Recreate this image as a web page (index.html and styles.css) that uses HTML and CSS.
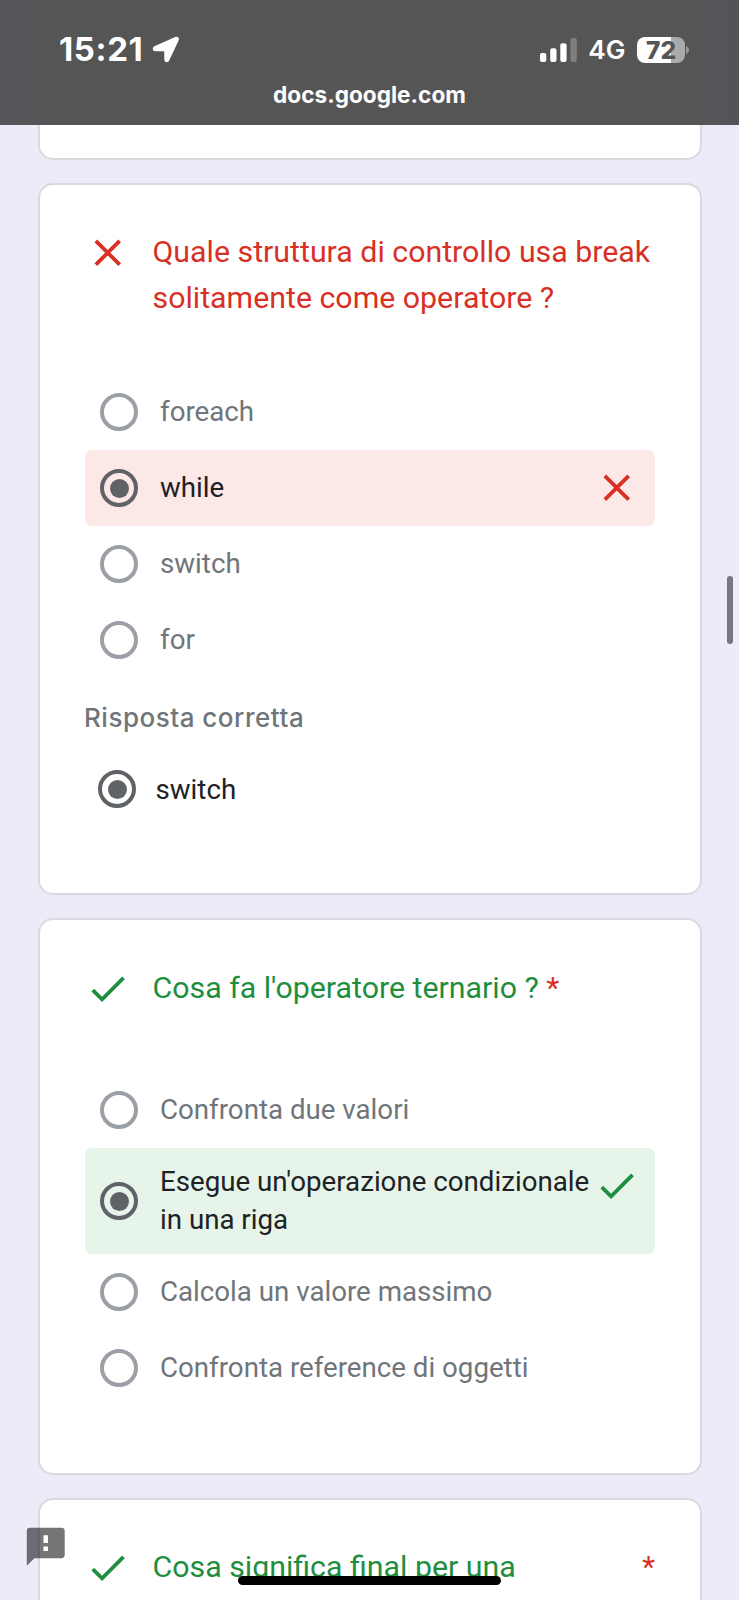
FILE: index.html
```html
<!DOCTYPE html>
<html lang="it">
<head>
<meta charset="utf-8">
<title>docs.google.com</title>
<link rel="stylesheet" href="styles.css">
</head>
<body>
<svg class="defs" aria-hidden="true">
  <symbol id="cross" viewBox="0 0 24 24"><path d="M19 6.41L17.59 5 12 10.59 6.41 5 5 6.41 10.59 12 5 17.59 6.41 19 12 13.41 17.59 19 19 17.59 13.41 12z"/></symbol>
  <symbol id="check" viewBox="0 0 24 24"><path d="M9 16.2L4.8 12l-1.4 1.4L9 19 21 7l-1.4-1.4L9 16.2z"/></symbol>
</svg>
<div class="screen">
  <header class="status">
    <div class="status-row">
      <div class="clock">
        <span class="time">15:21</span>
        <svg class="location" viewBox="0 0 28 28"><path d="M23.2 1.1 2.4 10.3C-.2 11.6.4 15.200 3.400 15.300H11.300Q12.300 15.300 12.300 16.300V23.600C12.400 26.700 15.900 27.200 17.200 24.600L26.600 4.400C27.700 1.900 25.600.100 23.200 1.100Z"/></svg>
      </div>
      <div class="indicators">
        <svg class="signal" viewBox="0 0 37 24"><rect x="0" y="15" width="6.300" height="9" rx="2"/><rect x="10.200" y="10.300" width="6.300" height="13.700" rx="2"/><rect x="20.300" y="5.300" width="6.300" height="18.700" rx="2"/><rect class="dim" x="30.500" y="0" width="6.300" height="24" rx="2"/></svg>
        <span class="network">4G</span>
        <div class="battery"><span class="level">72</span><svg class="cap" viewBox="0 0 3 8"><path d="M0 0C4 1.500 4 6.500 0 8Z"/></svg></div>
      </div>
    </div>
    <div class="url">docs.google.com</div>
  </header>
  <main class="form">
    <section class="card card-prev"></section>

    <section class="card card-wrong">
      <div class="question wrong">
        <svg class="mark"><use href="#cross"/></svg>
        <h2 class="title">Quale struttura di controllo usa break solitamente come operatore ?</h2>
      </div>
      <div class="options">
        <div class="option"><span class="radio"></span><span class="label">foreach</span></div>
        <div class="option chosen bad"><span class="radio"></span><span class="label">while</span><svg class="mark"><use href="#cross"/></svg></div>
        <div class="option"><span class="radio"></span><span class="label">switch</span></div>
        <div class="option"><span class="radio"></span><span class="label">for</span></div>
      </div>
      <div class="correct-heading">Risposta corretta</div>
      <div class="option chosen correct"><span class="radio"></span><span class="label">switch</span></div>
    </section>

    <section class="card card-right">
      <div class="question right">
        <svg class="mark"><use href="#check"/></svg>
        <h2 class="title">Cosa fa l'operatore ternario ? <span class="required">*</span></h2>
      </div>
      <div class="options">
        <div class="option"><span class="radio"></span><span class="label">Confronta due valori</span></div>
        <div class="option chosen good"><span class="radio"></span><span class="label">Esegue un'operazione condizionale<br>in una riga</span><svg class="mark"><use href="#check"/></svg></div>
        <div class="option"><span class="radio"></span><span class="label">Calcola un valore massimo</span></div>
        <div class="option"><span class="radio"></span><span class="label">Confronta reference di oggetti</span></div>
      </div>
    </section>

    <section class="card card-next">
      <div class="question right">
        <svg class="mark"><use href="#check"/></svg>
        <h2 class="title">Cosa significa final per una</h2>
        <span class="required aside">*</span>
      </div>
    </section>
  </main>
  <div class="scrollbar"></div>
  <svg class="feedback" viewBox="0 0 24 24"><path d="M20.500 2H3.500C2.700 2 2 2.700 2 3.500V22l4-4h14.500c.8 0 1.500-.7 1.500-1.500v-13C22 2.700 21.300 2 20.500 2zM13.200 14.300h-2.400v-2.400h2.400v2.400zM13.200 10h-2.400V5.900h2.400V10z"/></svg>
  <div class="home-indicator"></div>
</div>
</body>
</html>
```
FILE: styles.css
```css
* { box-sizing: border-box; }
body { margin: 0; background: #eeeaf8; font-family: Roboto, "Liberation Sans", sans-serif; }
.defs { position: absolute; width: 0; height: 0; }
.screen { position: relative; width: 739px; height: 1600px; overflow: hidden; background: #eeeaf8; }

.status {
  height: 125px;
  padding-top: 30px;
  background: linear-gradient(90deg, #55545a 0, #555 60px, #555 679px, #55535a 739px);
  color: #fff;
  font-family: Inter, "Liberation Sans", sans-serif;
}
.status-row { display: flex; justify-content: space-between; height: 39px; padding: 0 50px 0 59px; }
.clock, .indicators { display: flex; align-items: center; }
.time { font-size: 33px; font-weight: 700; line-height: 39px; letter-spacing: .6px; }
.location { width: 28px; height: 28px; margin-left: 9px; fill: #fff; }
.signal { width: 37px; height: 24px; fill: #fff; }
.signal .dim { opacity: .25; }
.network { margin-left: 11px; font-size: 26.300px; font-weight: 600; line-height: 39px; }
.battery { display: flex; align-items: center; margin-left: 11.500px; }
.level {
  width: 48px; height: 26px; border-radius: 8px;
  background: linear-gradient(90deg, #fff 34px, #aaa 34px);
  color: #555; font-size: 24.500px; font-weight: 800; line-height: 26px; text-align: center;
}
.cap { width: 3px; height: 8px; margin-left: 1px; fill: #999; }
.url { margin-top: 12px; font-size: 22.600px; font-weight: 700; line-height: 28px; text-align: center; }

.card { width: 664px; margin: 0 0 23px 38px; padding: 44px 45px 0; border: 2px solid #dbd8e0; border-radius: 15px; background: #fff; }
.card-prev { height: 35px; border-top: 0; border-radius: 0 0 15px 15px; padding: 0; }
.card-wrong { height: 712px; }
.card-right { height: 557px; }
.card-next { height: 200px; }

.question { display: flex; align-items: flex-start; }
.mark { flex: none; width: 45.500px; height: 45.500px; fill: currentColor; }
.question .mark { margin: 1px 0 0 -.5px; }
.title { margin: 0 0 0 22.500px; font-size: 30.320px; font-weight: 400; line-height: 45.500px; }
.wrong .title { width: 510px; margin-right: -10px; }
.wrong { color: #d93025; }
.right { color: #1e8e3e; }
.required { color: #d93025; }
.aside { margin-left: auto; font-size: 30.320px; line-height: 45.500px; }

.card-wrong .options { margin-top: 54.400px; }
.card-right { padding-top: 44.500px; }
.card-right .options { margin-top: 61.400px; }
.option { display: flex; align-items: center; min-height: 75.800px; padding: 15px; border-radius: 7px; color: #70757a; }
.label { flex: none; margin-left: 22px; font-size: 27.700px; line-height: 37.900px; }
.radio { display: grid; place-items: center; flex: none; width: 38px; height: 38px; border: 4px solid #9aa0a6; border-radius: 50%; }
.chosen { color: #202124; }
.chosen .radio { border-color: #5f6368; }
.chosen .radio::after { content: ""; width: 19px; height: 19px; border-radius: 50%; background: #5f6368; }
.option .mark { margin-left: auto; margin-right: .5px; }
.bad { background: #fce8e6; }
.bad .mark { color: #d93025; }
.good { min-height: 105px; background: #e6f4ea; }
.good .mark { align-self: flex-start; color: #1e8e3e; }
.correct-heading { margin: 21.600px 0 0 -1px; color: #70757a; font: 500 26px/38px Inter, sans-serif; letter-spacing: .5px; }
.correct { margin-top: 14.400px; padding-left: 13px; }
.correct .label { margin-left: 19.500px; }

.scrollbar { position: absolute; left: 727px; top: 576px; width: 6px; height: 68px; border-radius: 3px; background: #787581; }
.feedback { position: absolute; left: 23px; top: 1524px; width: 45.500px; height: 45.500px; fill: rgba(0, 0, 0, .54); }
.home-indicator { position: absolute; left: 238px; top: 1576px; width: 263px; height: 9px; border-radius: 5px; background: #000; }
```
